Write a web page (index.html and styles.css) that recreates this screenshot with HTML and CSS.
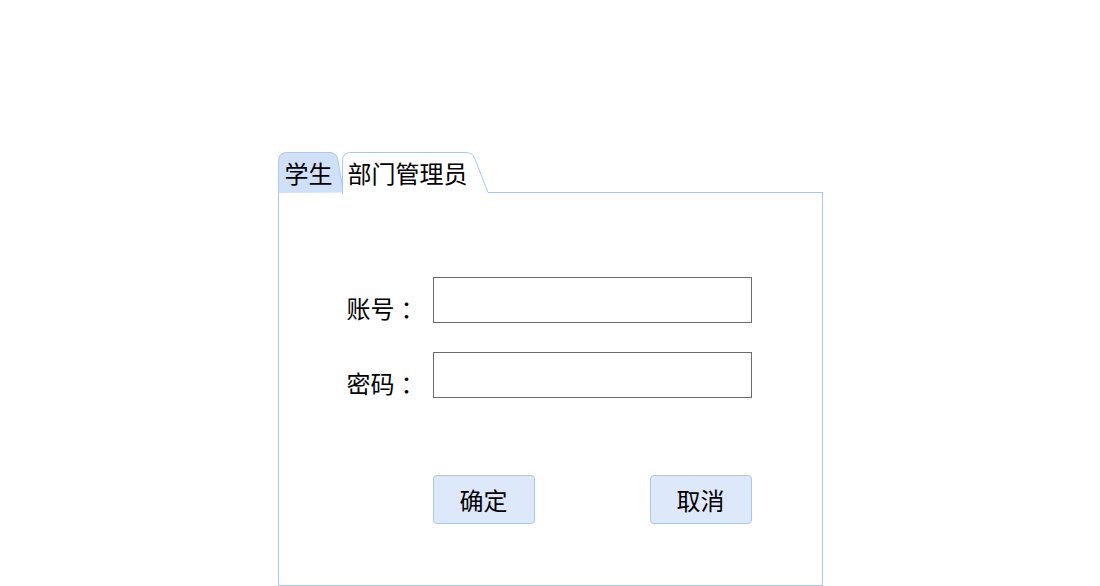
FILE: index.html
```html
<!DOCTYPE html>
<html lang="zh-CN">
<head>
    <meta charset="UTF-8">
    <title>登录</title>
    <link rel="stylesheet" href="styles.css">
</head>
<body>
    <div class="login">
        <div class="tabs">
            <div class="tab tab-student">
                <svg class="tab-shape" width="66" height="41" viewBox="0 0 66 41">
                    <path d="M0.5,41 V9 Q0.5,0.5 9,0.5 H52 Q57.5,0.5 59.5,6 L65.5,40.5" fill="#cfe0f8" stroke="#a9c8f0"/>
                </svg>
                <span>学生</span>
            </div>
            <div class="tab tab-admin active">
                <svg class="tab-shape" width="147" height="42" viewBox="0 0 147 42">
                    <path d="M0.5,42 V9 Q0.5,0.5 9,0.5 H124 Q130,0.5 132.5,6 L146,40.5 H147" fill="#fff" stroke="#a9c8f0"/>
                </svg>
                <span>部门管理员</span>
            </div>
            <div class="tab-fill"></div>
        </div>
        <div class="panel">
            <form class="form">
                <label for="account">账号<span class="colon">：</span></label>
                <input type="text" id="account">
                <label for="password">密码<span class="colon">：</span></label>
                <input type="password" id="password">
                <div class="actions">
                    <button type="submit">确定</button>
                    <button type="button">取消</button>
                </div>
            </form>
        </div>
    </div>
</body>
</html>
```

FILE: styles.css
```css
body {
    margin: 0;
    font-family: "Microsoft YaHei", "Noto Sans CJK SC", sans-serif;
    color: #000;
    background: #fff;
}
.login {
    width: 545px;
    margin: 152px auto 0;
}
.tabs {
    display: flex;
    height: 41px;
}
.tab {
    position: relative;
    height: 41px;
    font-size: 24px;
    line-height: 42px;
}
.tab span {
    position: relative;
}
.tab-shape {
    position: absolute;
    left: 0;
    top: 0;
}
.tab-student {
    width: 64px;
    padding-left: 7px;
    box-sizing: border-box;
}
.tab-admin {
    width: 146px;
    padding-left: 6px;
    box-sizing: border-box;
}
.tab-fill {
    flex: 1;
    border-bottom: 1px solid #a9c8f0;
}
.panel {
    height: 393px;
    border: 1px solid #a9c8f0;
    border-top: none;
    box-sizing: border-box;
    padding: 84px 0 0 68px;
}
.form {
    display: grid;
    grid-template-columns: 86px 319px;
    row-gap: 29px;
    align-items: end;
}
label {
    font-size: 24px;
    line-height: 30px;
}
.colon {
    padding-left: 6px;
}
input {
    width: 319px;
    height: 46px;
    margin: 0;
    border: 1px solid #6b6b6b;
    box-sizing: border-box;
    font-size: 20px;
    padding: 0 6px;
}
.actions {
    grid-column: 2;
    display: flex;
    justify-content: space-between;
    margin-top: 48px;
}
button {
    width: 102px;
    height: 49px;
    background-color: #dde9fb;
    border: 1px solid #a9c8f0;
    border-radius: 4px;
    font-family: inherit;
    font-size: 24px;
    color: #000;
    cursor: pointer;
}
```
